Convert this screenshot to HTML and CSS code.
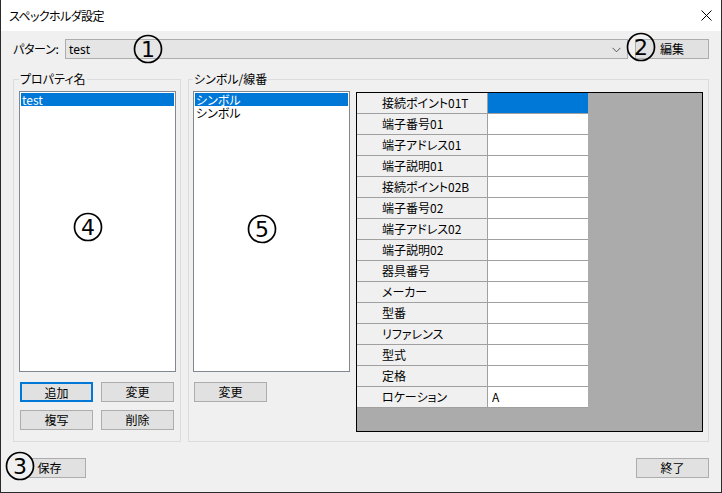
FILE: index.html
```html
<!DOCTYPE html>
<html lang="ja">
<head>
  <meta charset="UTF-8" />
  <title>スペックホルダ設定</title>
  <link rel="stylesheet" href="styles.css">
</head>
<body>
  <div class="window">
    <div class="titlebar">
      <span class="title">スペックホルダ設定</span>
      <svg class="close" width="11" height="11" viewBox="0 0 11 11">
        <path d="M0.5 0.5 L10.5 10.5 M10.5 0.5 L0.5 10.5" stroke="#000" stroke-width="1" fill="none"/>
      </svg>
    </div>

    <div class="content">
      <div class="pattern-row">
        <span class="pattern-label">パターン:</span>
        <div class="combo">
          <span>test</span>
          <svg class="combo-arrow" width="9" height="6" viewBox="0 0 9 6">
            <path d="M0.5 0.8 L4.5 4.8 L8.5 0.8" stroke="#555" stroke-width="1" fill="none"/>
          </svg>
        </div>
        <button class="btn">編集</button>
      </div>

      <div class="groups">
        <fieldset class="group group-props">
          <legend>プロパティ名</legend>
          <ul class="listbox">
            <li class="selected">test</li>
          </ul>
          <div class="btn-grid">
            <button class="btn focused">追加</button>
            <button class="btn">変更</button>
            <button class="btn">複写</button>
            <button class="btn">削除</button>
          </div>
        </fieldset>

        <fieldset class="group group-symbols">
          <legend>シンボル/線番</legend>
          <div class="symbol-layout">
            <div class="symbol-col">
              <ul class="listbox">
                <li class="selected">シンボル</li>
                <li>シンボル</li>
              </ul>
              <button class="btn">変更</button>
            </div>
            <div class="grid">
              <div class="row"><span class="head">接続ポイント01T</span><span class="cell active"></span></div>
              <div class="row"><span class="head">端子番号01</span><span class="cell"></span></div>
              <div class="row"><span class="head">端子アドレス01</span><span class="cell"></span></div>
              <div class="row"><span class="head">端子説明01</span><span class="cell"></span></div>
              <div class="row"><span class="head">接続ポイント02B</span><span class="cell"></span></div>
              <div class="row"><span class="head">端子番号02</span><span class="cell"></span></div>
              <div class="row"><span class="head">端子アドレス02</span><span class="cell"></span></div>
              <div class="row"><span class="head">端子説明02</span><span class="cell"></span></div>
              <div class="row"><span class="head">器具番号</span><span class="cell"></span></div>
              <div class="row"><span class="head">メーカー</span><span class="cell"></span></div>
              <div class="row"><span class="head">型番</span><span class="cell"></span></div>
              <div class="row"><span class="head">リファレンス</span><span class="cell"></span></div>
              <div class="row"><span class="head">型式</span><span class="cell"></span></div>
              <div class="row"><span class="head">定格</span><span class="cell"></span></div>
              <div class="row"><span class="head">ロケーション</span><span class="cell">A</span></div>
            </div>
          </div>
        </fieldset>
      </div>

      <div class="footer">
        <button class="btn">保存</button>
        <button class="btn">終了</button>
      </div>
    </div>

    <!-- annotation markers -->
    <span class="marker m1"><svg viewBox="0 0 30 30"><circle cx="15" cy="15" r="13.5"/></svg>1</span>
    <span class="marker m2"><svg viewBox="0 0 30 30"><circle cx="15" cy="15" r="13.5"/></svg>2</span>
    <span class="marker m3 filled"><svg viewBox="0 0 30 30"><circle cx="15" cy="15" r="13.5"/></svg>3</span>
    <span class="marker m4"><svg viewBox="0 0 30 30"><circle cx="15" cy="15" r="13.5"/></svg>4</span>
    <span class="marker m5"><svg viewBox="0 0 30 30"><circle cx="15" cy="15" r="13.5"/></svg>5</span>
  </div>
</body>
</html>
```

FILE: styles.css
```css
* {
  margin: 0;
  padding: 0;
  box-sizing: border-box;
}

body {
  background: #f0f0f0;
  font-family: 'Noto Sans CJK JP', 'Noto Sans', sans-serif;
  font-feature-settings: 'palt';
  font-size: 12px;
  color: #000;
}

.window {
  position: relative;
  width: 722px;
  height: 493px;
  border: 1px solid #2b2b2b;
  border-top: none;
  display: flex;
  flex-direction: column;
  background: #f0f0f0;
}

.titlebar {
  height: 31px;
  background: #fff;
  display: flex;
  align-items: center;
  justify-content: space-between;
  padding: 0 9px 0 8px;
}

.title {
  font-size: 12px;
  letter-spacing: -0.6px;
}

.content {
  flex: 1;
  padding: 8px 12px 0 12px;
}

.pattern-row {
  display: flex;
  height: 20px;
}

.pattern-label {
  width: 52px;
  flex-shrink: 0;
  white-space: nowrap;
  line-height: 20px;
  letter-spacing: -0.3px;
}

.combo {
  flex: 1;
  display: flex;
  align-items: center;
  justify-content: space-between;
  background: #e5e5e5;
  border: 1px solid #adadad;
  padding: 0 6px 0 3px;
  margin-right: 7px;
  font-family: 'Noto Sans', sans-serif;
}

.combo-arrow {
  margin-top: 1px;
}

.btn {
  width: 73px;
  height: 20px;
  background: #e1e1e1;
  border: 1px solid #adadad;
  font-family: inherit;
  font-size: 12px;
  color: #000;
  line-height: 18px;
}

.btn.focused {
  border: 2px solid #0078d7;
}

.pattern-row .btn {
  width: 74px;
}

.groups {
  display: flex;
  gap: 7px;
  margin-top: 13px;
}

.group {
  border: 1px solid #dcdcdc;
  min-width: 0;
}

.group legend {
  line-height: 14px;
  padding: 0 1px;
}

.group-props {
  width: 168px;
  padding: 5px 4px 11px 5px;
}

.group-symbols {
  flex: 1;
  padding: 5px 5px 9px 4px;
}

.listbox {
  list-style: none;
  background: #fff;
  border: 1px solid #828790;
  padding: 1px;
  height: 281px;
}

.listbox li {
  line-height: 13px;
  height: 13px;
  padding-left: 1px;
}

.listbox li.selected {
  background: #0078d7;
  color: #fff;
}

.btn-grid {
  display: grid;
  grid-template-columns: 73px 73px;
  gap: 8px;
  margin-top: 10px;
  padding-left: 1px;
}

.symbol-layout {
  display: flex;
  gap: 6px;
}

.symbol-col {
  width: 157px;
  display: flex;
  flex-direction: column;
  gap: 10px;
}

.symbol-col .btn {
  margin-left: 1px;
}

.grid {
  flex: 1;
  height: 340px;
  margin-top: 1px;
  border: 1px solid #000;
  background: #ababab;
}

.row {
  display: flex;
  height: 21px;
}

.head,
.cell {
  height: 21px;
  line-height: 20px;
  border-bottom: 1px solid #a0a0a0;
}

.head {
  width: 131px;
  padding-left: 25px;
  background: #f0f0f0;
  border-right: 1px solid #a0a0a0;
}

.cell {
  width: 100px;
  padding-left: 4px;
  background: #fff;
}

.cell.active {
  background: #0078d7;
}

.footer {
  display: flex;
  justify-content: space-between;
  margin-top: 16px;
}

.marker {
  position: absolute;
  z-index: 1;
  width: 30px;
  height: 30px;
  display: flex;
  align-items: center;
  justify-content: center;
  font-family: 'DejaVu Sans', sans-serif;
  font-size: 22px;
  color: #000;
}

.marker svg {
  position: absolute;
  left: 0;
  top: 0;
  width: 30px;
  height: 30px;
  z-index: -1;
}

.marker circle {
  fill: none;
  stroke: #000;
  stroke-width: 1.7;
}

.marker.filled circle {
  fill: #f0f0f0;
}

.m1 { left: 132px; top: 34px; }
.m2 { left: 625px; top: 32px; }
.m3 { left: 4px; top: 451px; }
.m4 { left: 72px; top: 212px; }
.m5 { left: 246px; top: 214px; }
```
